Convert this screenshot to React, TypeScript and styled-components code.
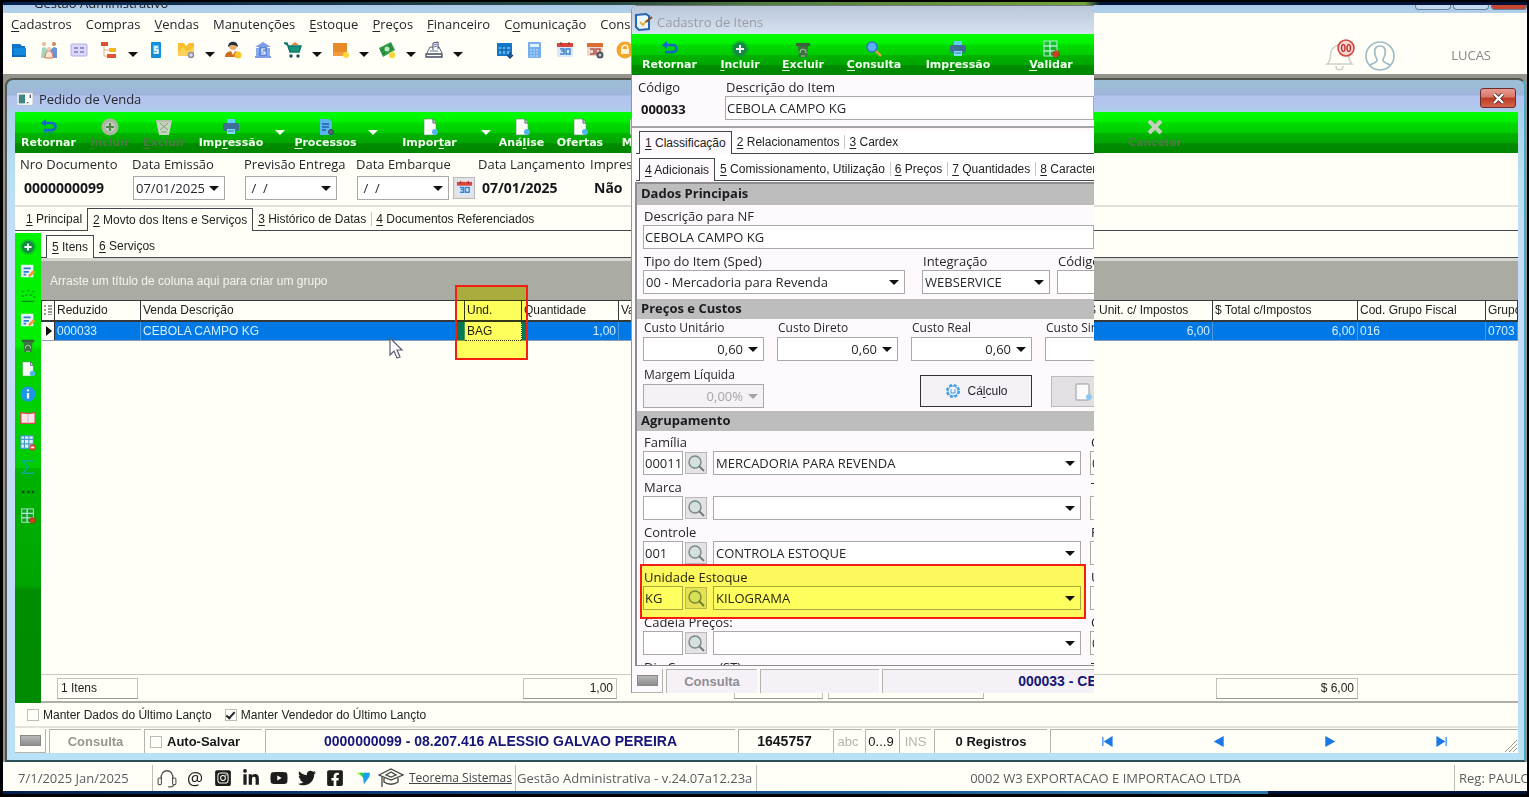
import React, { useId } from "react";
import styled, { createGlobalStyle, css } from "styled-components";
import { FaFacebookSquare, FaInstagramSquare, FaLinkedinIn, FaTwitter, FaYoutube } from "react-icons/fa";

const ui = `"Open Sans", "Noto Sans", sans-serif`;
const sys = `"Liberation Sans", Arial, sans-serif`;
const wide = `"DejaVu Sans", Verdana, sans-serif`;
const paper = "#fffff8";
const rose = "#fdf9fd";

const Global = createGlobalStyle`
  * { box-sizing: border-box; }
  body { margin: 0; background: #000; overflow: hidden; font: 13px/18px ${ui}; color: #26262c; }
  button, input, select { font: inherit; color: inherit; margin: 0; border-radius: 0; }
  button { padding: 0; background: none; border: 0; }
  svg { display: block; flex: none; }
  u { text-underline-offset: 2px; }
`;

/* Text with "&" before the shortcut letter */
const mn = (s: string) => {
  const i = s.indexOf("&");
  return i < 0 ? <span>{s}</span> : <span>{s.slice(0, i)}<u>{s[i + 1]}</u>{s.slice(i + 2)}</span>;
};

/* ---------- icons ---------- */
const Svg = ({ size = 18, children }: { size?: number; children: React.ReactNode }) => (
  <svg width={size} height={size} viewBox="0 0 18 18" fill="none" aria-hidden="true">{children}</svg>
);

const icons: Record<string, React.ReactNode> = {
  folder: <><path d="M2 3h8l2 2h3v11H2z" fill="#0f74c9" /><path d="M4 7h12v9H4z" fill="#1089e0" /><path d="M2 15h14" stroke="#0a5296" /></>,
  people: <><circle cx="4" cy="3" r="2" fill="#e9b68d" /><circle cx="14" cy="3" r="2" fill="#c48a5b" /><path d="M1 17l1-10 3-1 3 3-1 3-1 5z" fill="#a6d3b9" /><path d="M17 17V7l-3-1-4 3 2 3 1 5z" fill="#6b93d6" /><path d="M5 17c0-5 2-7 4-7s4 2 4 7z" fill="#f7e4d7" stroke="#e2714e" /><circle cx="9" cy="8" r="2" fill="#f0c7a5" /></>,
  card: <><rect x="1" y="3" width="16" height="12" rx="1" fill="#dcd9f7" stroke="#b2aee4" /><path d="M4 7h4M4 11h4M10 7h4M10 11h4" stroke="#7a78d0" strokeWidth="1.5" /></>,
  tree: <><path d="M4 4v11h6M4 9h6" stroke="#d9b390" /><rect x="1" y="1" width="7" height="4" fill="#d2542f" /><rect x="9" y="7" width="7" height="4" fill="#f3b81f" /><rect x="7" y="13" width="9" height="4" fill="#e0552e" /></>,
  phone: <><rect x="4" y="1" width="10" height="16" rx="1" fill="#128edb" /><rect x="6" y="4" width="6" height="9" fill="#59b8f2" /><path d="M11 6H8v3h3v3H7" stroke="#fff" strokeWidth="1.4" /></>,
  yellow: <><path d="M1 2h6l2 3 3-3h5v13H1z" fill="#f8c02f" /><path d="M1 12l5-6 4 5 7-5v9H1z" fill="#fbd25c" /><circle cx="14" cy="14" r="2.5" fill="#d9dce2" stroke="#8a919c" strokeWidth="1.5" /></>,
  user: <><circle cx="9" cy="5" r="4" fill="#e7ae72" /><path d="M4 6c0-7 10-7 10 0-2-2-6-2-7-2z" fill="#27313a" /><path d="M1 16c0-4 3-6 8-6s6 2 7 6z" fill="#cf6d1c" /><path d="M7 10l2 4 2-4z" fill="#fff" /><circle cx="14" cy="14" r="3.5" fill="#fbc62c" /></>,
  bank: <><path d="M1 6l8-5 8 5z" fill="#7d9de6" /><path d="M2 7h14v8H2z" fill="#8ba9ec" /><path d="M1 16h16" stroke="#7d9de6" strokeWidth="2" /><rect x="5" y="6" width="8" height="9" fill="#5f86dd" /><path d="M11 8H8v3h3v2H7" stroke="#fff" strokeWidth="1.2" /></>,
  cart: <><path d="M0 2h3l3 9h9l2-6H5z" fill="#16967f" stroke="#0d7a6a" strokeWidth="1.5" /><path d="M7 4l4-3 4 3z" fill="#e9823b" /><circle cx="7" cy="15" r="1.7" fill="#1d4e57" /><circle cx="14" cy="15" r="1.7" fill="#1d4e57" /></>,
  box: <><rect x="2" y="2" width="14" height="13" fill="#e88a2a" /><path d="M2 11h14v4H2z" fill="#f39c3b" /><circle cx="15" cy="14" r="3" fill="#ffd83b" /></>,
  money: <><path d="M1 7l12-6 4 8-12 7z" fill="#2f9b45" /><path d="M2 10l12-6M4 13l11-6" stroke="#1d7a35" /><circle cx="9" cy="8" r="2.5" fill="#bfe9bf" /><circle cx="14" cy="14" r="3.2" fill="#f9d83a" /></>,
  register: <><path d="M2 12l3-6h9l3 6" stroke="#555b6e" /><path d="M1 13h16v3H1z" fill="#fff" stroke="#444a5c" strokeWidth="1.3" /><path d="M8 9V2l5-1v7" fill="#fff" stroke="#444b66" /><path d="M9 4l3-1M9 6l3-1M5 10h8" stroke="#6471a5" /></>,
  calBlue: <><path d="M1 2h15v13H1z" fill="#1377c8" /><path d="M3 6h11v7H3z" fill="#59b2ee" /><path d="M3 9h11M6 6v7M10 6v7" stroke="#0f66ae" strokeWidth="1.4" /><path d="M14 11v6M11 14l3 3 3-3" stroke="#18417f" strokeWidth="1.3" /></>,
  calc: <><rect x="2" y="1" width="13" height="16" rx="1" fill="#76aeea" /><rect x="4" y="3" width="9" height="3" fill="#dff0ff" /><path d="M4 9h9M4 12h9M4 15h9" stroke="#a8cff6" strokeWidth="1.5" strokeDasharray="2 1" /></>,
  cal: <><rect x="1" y="2" width="16" height="14" rx="1" fill="#d9ebfa" /><path d="M1 2h16v4H1z" fill="#d8463b" /><path d="M5 1v3M13 1v3" stroke="#8b2c2c" /><path d="M4 8h4v5H4M5 10h3M10 8h4v5h-4z" stroke="#3f84cf" strokeWidth="1.5" /></>,
  calGear: <><rect x="1" y="2" width="16" height="13" rx="1" fill="#ecd9ce" /><path d="M1 2h16v4H1z" fill="#dc6c35" /><path d="M4 8h4v5H4M10 8h4v5h-4z" stroke="#b5524a" strokeWidth="1.5" /><circle cx="14" cy="14" r="2.5" fill="#ccc" stroke="#4c5560" strokeWidth="2" /></>,
  lock: <><circle cx="9" cy="9" r="8.5" fill="#f1a62a" /><rect x="5" y="8" width="8" height="5" fill="#fff3d6" /><path d="M6 8c0-5 6-5 6 0" stroke="#fff3d6" strokeWidth="1.5" /></>,
  back: <><path d="M3 5h8c6 0 6 7 0 7H4" stroke="#1467c9" strokeWidth="2.5" /><path d="M1 5l5-4v8z" fill="#1467c9" /><path d="M4 14h9" stroke="#0f5eb8" strokeDasharray="1 1" /></>,
  plus: <><circle cx="9" cy="9" r="7" fill="#128b45" /><circle cx="9" cy="9" r="8" stroke="#128b45" strokeDasharray="2 1" /><path d="M9 5v8M5 9h8" stroke="#fff" strokeWidth="2" /></>,
  plusOff: <><circle cx="9" cy="9" r="8.5" fill="#aab8a2" /><circle cx="9" cy="9" r="5" fill="#c3cdbb" /><path d="M9 5v8M5 9h8" stroke="#50864a" strokeWidth="2" /></>,
  trash: <><path d="M2 3h14v3H2z" fill="#37633a" /><path d="M4 6h10l-1 11H5z" fill="#3e7040" /><path d="M6 13c0-5 6-5 6 0M7 16h4" stroke="#9ac79a" strokeWidth="1.2" /></>,
  trashOff: <><path d="M1 2h16l-3 15H4z" fill="#c6d3be" /><path d="M5 5l8 7M13 5l-8 7M6 14h6" stroke="#7ea479" /><path d="M1 3h16" stroke="#b4c2ac" strokeWidth="2" /></>,
  printer: <><path d="M5 1h8v5H5z" fill="#5fd0f2" /><rect x="1" y="5" width="16" height="8" rx="2" fill="#3d6f96" /><path d="M5 11h8v5H5z" fill="#7fdcf5" /><path d="M6 13h6" stroke="#2e7ba5" /></>,
  docGear: <><path d="M3 1h9l3 3v13H3z" fill="#5cb4ee" /><path d="M5 6h7M5 9h7M5 12h4" stroke="#1e62a8" strokeWidth="1.3" /><circle cx="14" cy="14" r="2.5" fill="#567" stroke="#2f4a66" /></>,
  doc: <><path d="M3 1h9l3 4v12H3z" fill="#fafcf7" stroke="#5d8f62" strokeWidth=".6" /><path d="M12 1v4h3" stroke="#557" /><circle cx="14" cy="14" r="3" fill="#54b5ea" /></>,
  cross: <path d="M3 3l12 12M15 3L3 15" stroke="#c9cfbe" strokeWidth="4" />,
  lens: <><circle cx="7" cy="7" r="5" fill="#5bb0f4" stroke="#2d71d0" strokeWidth="1.5" /><path d="M11 11l5 5" stroke="#d8a04a" strokeWidth="2.5" /></>,
  search: <><circle cx="8" cy="8" r="6" fill="#cfe0e0" fillOpacity=".7" stroke="#798888" strokeWidth="1.4" /><path d="M12 12l5 5" stroke="#6e7b7b" strokeWidth="1.8" /></>,
  grid: <><rect x="2" y="1" width="13" height="15" fill="#2f8a5e" fillOpacity=".35" stroke="#b3ecd4" /><path d="M2 6h13M2 11h13M8 1v15" stroke="#b3ecd4" strokeWidth="1.4" /><circle cx="14" cy="14" r="3" fill="#d23b1d" /><circle cx="14" cy="14" r="3.5" stroke="#8d3318" strokeDasharray="2 1" /></>,
  edit: <><rect x="1" y="2" width="14" height="14" fill="#e7f4fc" /><path d="M4 6h8M4 10h6M4 13h3" stroke="#2e7ad4" strokeWidth="2" /><path d="M10 15l6-6" stroke="#f09a2c" strokeWidth="3" /></>,
  dots: <path d="M2 4h2M8 3h2M14 4h2M2 9h2M6 8h2M11 8h2M15 10h2M2 15h14" stroke="#0a8a1d" strokeWidth="1.5" />,
  info: <><circle cx="9" cy="9" r="8.5" fill="#1b95e8" /><path d="M9 8v6M9 4v2" stroke="#fff" strokeWidth="2.5" /></>,
  book: <><path d="M1 3l8 1 8-1v12H1z" fill="#f7e6ec" stroke="#df4350" strokeWidth="1.4" /><path d="M9 4v11" stroke="#d9aebb" /></>,
  table: <><rect x="1" y="1" width="14" height="14" fill="#dff2fc" /><path d="M1 5h14M1 10h14M5 1v14M10 1v14M1 1h14v14H1z" stroke="#4798c6" strokeWidth="1.3" /><circle cx="14" cy="14" r="3.5" fill="#d7402a" /><path d="M12 14h4" stroke="#fff" strokeWidth="2" /></>,
  sigma: <path d="M15 4V2H3l6 7-6 7h12v-2" stroke="#12a893" strokeWidth="1.6" />,
  more: <path d="M2 9h3M8 9h3M13 9h3" stroke="#12521b" strokeWidth="3" />,
  gear: <><circle cx="9" cy="9" r="6" stroke="#3c9fe3" strokeWidth="2" strokeDasharray="3 1.7" /><circle cx="9" cy="9" r="5" stroke="#3c9fe3" /><path d="M7 7v4h4V7" stroke="#3c9fe3" /></>,
  note: <><rect x="2" y="1" width="13" height="16" rx="1" fill="#fafafa" stroke="#9a9a9f" /><circle cx="15" cy="14" r="3" fill="#8bcaf3" /></>,
  form: <><path d="M1 2l10-1 3 2v13l-10 1-3-3z" fill="#eef6ff" stroke="#2767b4" strokeWidth="2" /><path d="M5 9l3 3 4-5" stroke="#e2b43d" strokeWidth="2" /><path d="M11 9l6-5" stroke="#844d33" strokeWidth="2" /></>,
  win: <><rect x="0" y="2" width="18" height="14" fill="#fff" stroke="#b7b7c4" /><path d="M2 4h7v10H2z" fill="#3f8680" /><path d="M11 13h2M15 4v4" stroke="#557" strokeWidth="1.5" /></>,
  headset: <><path d="M4 10C2 0 16 0 14 10" stroke="#555" strokeWidth="1.2" /><rect x="1" y="9" width="3" height="6" rx="1" stroke="#555" /><rect x="14" y="9" width="3" height="6" rx="1" stroke="#555" /><path d="M15 15c0 2-2 2-5 2" stroke="#555" /></>,
  brand: <><path d="M1 3h8v5z" fill="#b8e62c" /><path d="M5 3h7v5H8z" fill="#1ed36a" /><path d="M10 3h7l-1 5-6 8-1-8z" fill="#1b9df0" /></>,
};
const Icon = ({ name, size }: { name: string; size?: number }) => <Svg size={size}>{icons[name]}</Svg>;

const Caret = styled.i<{ $c?: string; $low?: boolean }>`
  display: block; flex: none; border: 5px solid transparent; border-bottom: 0; border-top-color: ${p => p.$c || "#111"};
  ${p => p.$low && "margin-top: 8px;"}
`;

/* ---------- application frame ---------- */
const Page = styled.div`
  position: relative; display: flex; flex-direction: column; min-height: 100vh; padding: 2px 2px 3px 3px; overflow: hidden;
`;
const Wallpaper = styled.div<{ $bottom?: boolean }>`
  height: 3px; flex: none;
  background: ${p => p.$bottom
    ? "linear-gradient(90deg, #04204d, #0d3f7c 30%, #2b76ab 83%, #001236 83%)"
    : "linear-gradient(90deg, #04204d, #2a4f45 41%, #4f7f3c 50%, #72a63c 71%, #001236 72%)"};
`;
const AppTitle = styled.div`
  display: flex; align-items: flex-end; height: 8px; flex: none; padding-left: 31px; overflow: hidden;
  background: linear-gradient(#adc8ea, #b0d2ea); color: #222; line-height: 20px;
  justify-content: space-between;
`;
const WinTabs = styled.div`
  display: flex; gap: 2px; align-self: flex-start;
`;
const WinTab = styled.span<{ $red?: boolean }>`
  width: 36px; height: 5px; border: 1px solid #66809c; border-top: 0; border-radius: 0 0 4px 4px;
  background: ${p => p.$red ? "#c8452f" : "#c4d9ee"};
`;
const Menu = styled.nav`
  display: flex; gap: 14px; height: 23px; flex: none; padding-left: 8px; background: ${paper}; white-space: nowrap; line-height: 23px;
`;
const MenuItem = styled.button``;
const Tools = styled.div`
  display: flex; align-items: flex-start; height: 38px; flex: none; padding-left: 1px; background: ${paper};
`;
const Tool = styled.button<{ $w?: number; $gap?: number }>`
  display: grid; place-items: center; width: ${p => p.$w || 30}px; height: 28px; margin-left: ${p => p.$gap || 0}px; flex: none;
`;
const Account = styled.div`
  display: flex; align-items: center; gap: 10px; margin-left: auto; padding-right: 36px; height: 38px; color: #85858c;
`;
const UserName = styled.span`margin-left: 46px;`;
const Mdi = styled.main`
  display: flex; flex: 1; min-height: 0; padding: 4px 1px 0 2px; background: #94948c;
`;
const Window = styled.section`
  display: flex; flex-direction: column; flex: 1; min-width: 0; padding: 0 6px 7px 8px;
  border: 2px solid #50564e; border-right-color: #4aaac4; border-bottom-color: #2c5058; border-radius: 8px 8px 0 0;
  background: linear-gradient(#9dbcd6 0 6px, #a0b4de 15px, #b3c5ee 16px 24px, #a9d1e8 32px, #b9e0f4 100px, #c8dcf8 180px, #bfdcf8 90%, #b8e2f6);
`;
const Caption = styled.header`
  display: flex; align-items: center; gap: 6px; height: 32px; flex: none; padding: 6px 2px 0; line-height: 26px;
`;
const Close = styled.button`
  display: grid; place-items: center; width: 36px; height: 20px; margin: 0 0 2px auto; border: 1px solid #6d2c2c; border-radius: 3px;
  background: linear-gradient(#e89a90, #d9786a 45%, #bb3a22 50%, #d6654e);
`;
const GreenBar = styled.div`
  display: flex; height: 41px; flex: none; overflow: hidden;
  background: linear-gradient(#00ff00, #00f000 25%, #00dc00 26%, #00cc00 50%, #00b400 51%, #00a400 76%, #008c00 77%, #008600);
`;
const Act = styled.button<{ $w: number; $off?: boolean; $gap?: number }>`
  display: flex; flex-direction: column; align-items: center; flex: none; width: ${p => p.$w}px; margin-left: ${p => p.$gap || 0}px; padding-top: 6px;
  font: bold 11px/14px ${wide}; color: #f3fff0; white-space: nowrap;
  ${p => p.$off && css`color: #4b7a43;`}
`;
const Drop = styled.button<{ $w: number }>`
  display: grid; place-items: center; width: ${p => p.$w}px; height: 41px; flex: none;
`;
const Client = styled.div`
  display: flex; flex-direction: column; flex: 1; min-height: 0; background: ${paper};
`;
const Head = styled.div`
  display: flex; height: 54px; flex: none; padding: 2px 0 0 5px; border-bottom: 2px solid #e0e0da; white-space: nowrap;
`;
const HeadCell = styled.div<{ $w: number }>`width: ${p => p.$w}px; flex: none;`;
const HeadRow = styled.div`display: flex; align-items: center; gap: 4px; height: 24px; margin: 3px 0 0 1px;`;
const Strong = styled.output`display: block; padding-left: 3px; font-weight: bold; font-size: 14px; color: #15151a;`;

/* ---------- controls ---------- */
const Combo = styled.div<{ $w?: number; $off?: boolean }>`
  position: relative; display: flex; align-items: center; width: ${p => p.$w ? `${p.$w}px` : "auto"}; height: 24px; flex: none;
  border: 1px solid #a9a9ac; background: ${p => p.$off ? "#f5f1f5" : "#fff"};
  & > i { position: absolute; right: 5px; pointer-events: none; }
`;
const ComboSelect = styled.select<{ $right?: boolean }>`
  appearance: none; width: 100%; height: 100%; border: 0; padding: 0 20px 0 2px; background: none; outline: 0; opacity: 1;
  text-align-last: ${p => p.$right ? "right" : "left"};
  &:disabled { color: #a5a5a8; }
`;
const Box = styled.input<{ $w?: number }>`
  width: ${p => p.$w ? `${p.$w}px` : "100%"}; height: 24px; flex: none; padding: 0 0 0 1px; border: 1px solid #a9a9ac; background: #fff; outline: 0;
`;
const Choice = ({ id, label, value, w, right, off }: { id?: string; label?: string; value: string; w?: number; right?: boolean; off?: boolean }) => (
  <Combo $w={w} $off={off}>
    <ComboSelect id={id} aria-label={label} $right={right} disabled={off}><option>{value}</option></ComboSelect>
    <Caret $c={off ? "#a5a5a8" : undefined} />
  </Combo>
);
const SmallBtn = styled.button`
  display: grid; place-items: center; width: 22px; height: 22px; flex: none; border: 1px solid #b9b9bb; background: #e4e2e4;
`;

/* ---------- tabs ---------- */
const TabRow = styled.div<{ $pad?: number; $mt?: number }>`
  display: flex; height: 23px; flex: none; margin-top: ${p => p.$mt || 0}px; padding-left: ${p => p.$pad || 0}px;
  border-bottom: 1px solid #44484c; font: 12px/22px ${sys}; white-space: nowrap; color: #222;
`;
const Tab = styled.button<{ $on?: boolean; $bg?: string; $sep?: boolean }>`
  position: relative; padding: 0 5px; flex: none; height: 22px;
  ${p => p.$sep && css`&::before { content: ""; position: absolute; left: 0; top: 4px; height: 14px; border-left: 1px solid #c8c8c4; }`}
  ${p => p.$on && css`height: 23px; border: 1px solid #44484c; border-bottom: 0; background: ${p.$bg || paper};`}
`;

/* ---------- order grid ---------- */
const Work = styled.div`display: flex; flex: 1; min-height: 0; margin-top: 2px;`;
const Side = styled.aside`
  display: flex; flex-direction: column; align-items: center; width: 26px; flex: none; padding-top: 1px;
  background: linear-gradient(#00f400, #00ee00 24%, #00d400 25%, #00cc00 50%, #00b400 50%, #00a400 75%, #008e00 76%, #008a00);
`;
const SideBtn = styled.button<{ $tall?: boolean }>`display: grid; place-items: center; width: 26px; height: ${p => p.$tall ? 25 : 24}px;`;
const Sheet = styled.div`position: relative; display: flex; flex-direction: column; flex: 1; min-width: 0;`;
const GroupHint = styled.div`
  height: 42px; flex: none; padding: 0 0 0 9px; border-top: 3px solid #d8d8d2; background: #aaaca4; color: #f4f4ee; font: 12px/40px ${sys};
`;
const GridArea = styled.div`flex: 1; min-height: 0; border-bottom: 1px solid #c8c8c0;`;
const Table = styled.table`
  width: 100%; table-layout: fixed; border-collapse: collapse; font: 12px/18px ${sys}; white-space: nowrap; color: #222;
  th, td { height: 20px; padding: 0 2px; overflow: hidden; text-align: left; font-weight: normal; }
  th { border: 1px solid #33383a; border-width: 1px 1px 2px; }
  td { background: #0079e6; color: #d4efff; border-right: 1px solid #4f9ae0; border-bottom: 1px solid #88a0b8; }
`;
const Num = styled.td`&&& { text-align: right; }`;
const Edit = styled.td`&&& { background: #fff; color: #222; border: 1px dotted #333; }`;
const Mark = styled.td`&&& { background: ${paper}; color: #111; border-right: 1px solid #333; padding: 0; }`;
const Totals = styled.div`
  display: flex; align-items: center; height: 28px; flex: none; padding-left: 16px;
  background: ${paper}; border-bottom: 2px solid #aeb0a8; font: 12px/19px ${sys}; color: #222;
`;
const Total = styled.output<{ $w: number; $gap?: number; $right?: boolean }>`
  width: ${p => p.$w}px; height: 21px; margin-left: ${p => p.$gap || 0}px; flex: none; padding: 0 3px; border: 1px solid #c0c2b8; border-bottom-color: #999;
  text-align: ${p => p.$right ? "right" : "left"};
`;
const Highlight = styled.div<{ $x: number; $y: number; $w: number; $h: number }>`
  position: absolute; left: ${p => p.$x}px; top: ${p => p.$y}px; width: ${p => p.$w}px; height: ${p => p.$h}px;
  border: 2px solid #f41f12; pointer-events: none;
  &::before { content: ""; position: absolute; inset: 0; background: #ffff5e; mix-blend-mode: multiply; }
`;
const Pointer = styled.div`position: absolute; left: 347px; top: 103px;`;
const Checks = styled.div`
  display: flex; align-items: center; gap: 13px; height: 25px; flex: none; padding-left: 12px; border-bottom: 2px solid #e4e4de; font: 12px/20px ${sys}; color: #222;
`;
const CheckLabel = styled.label`display: flex; align-items: center; gap: 4px;`;
const Check = styled.input`
  appearance: none; width: 12px; height: 12px; margin: 0; border: 1px solid #bdbdb6; background: #fffffb; display: grid; place-items: center;
  &:checked::before { content: ""; width: 7px; height: 3px; border: 2px solid #222; border-top: 0; border-right: 0; transform: rotate(-48deg); }
`;
const Status = styled.footer`
  display: flex; gap: 3px; height: 25px; flex: none; padding-top: 1px; font: bold 13px/23px ${sys}; color: #15151a; white-space: nowrap;
`;
const Panel = styled.div<{ $w?: number; $c?: string; $thin?: boolean; $big?: boolean; $start?: boolean; $bg?: string }>`
  display: flex; align-items: center; justify-content: ${p => p.$start ? "flex-start" : "center"}; gap: 5px; ${p => p.$w ? `width: ${p.$w}px; flex: none;` : "flex: 1;"}
  border: 1px solid #b4b4ae; border-right: 0; border-bottom: 0; color: ${p => p.$c || "inherit"}; background: ${p => p.$bg || "none"};
  ${p => p.$thin && css`font-weight: normal;`}
  ${p => p.$big && css`font-size: 14px;`}
  ${p => p.$start && css`padding-left: 5px;`}
`;
const Led = styled.div`
  display: grid; place-items: center; width: 31px; flex: none; border: 1px solid #b4b4ae; border-top: 0; border-left: 0;
  &::before { content: ""; width: 19px; height: 9px; border: 1px solid #888; background: linear-gradient(#b8b8b8, #8d8d8d); }
`;
const Nav = styled.div`
  position: relative; display: flex; justify-content: space-around; flex: 1; padding-right: 20px; border: 1px solid #b4b4ae; border-right: 0; border-bottom: 0;
`;
const NavBtn = styled.button`display: grid; place-items: center; width: 16px;`;
const Grip = styled.svg`position: absolute; right: 1px; bottom: 1px;`;

/* ---------- bottom bar ---------- */
const Bottom = styled.footer`
  display: flex; height: 29px; flex: none; padding-top: 3px; background: ${paper}; color: #5c5c62; line-height: 26px; white-space: nowrap; overflow: hidden;
`;
const Slot = styled.div<{ $w?: number; $pad?: number; $sep?: boolean }>`
  display: flex; align-items: center; ${p => p.$w ? `width: ${p.$w}px; flex: none;` : "flex: 1; justify-content: center;"}
  padding-left: ${p => p.$pad || 0}px; ${p => p.$sep && "border-right: 1px solid #bdbdb8;"}
`;
const Social = styled.a`display: grid; place-items: center; width: 28px; flex: none; color: #1d1d1d; font-size: 18px; text-decoration: none;`;
const Site = styled.a`color: #44444a; text-decoration: underline; font-size: 12px; padding-left: 4px;`;

/* ---------- item window ---------- */
const ItemWindow = styled.section`
  position: absolute; left: 631px; top: 5px; width: 463px; overflow: hidden; white-space: nowrap;
  border-left: 1px solid #8f97a5; border-radius: 6px 0 0 0; background: ${rose};
`;
const ItemCaption = styled.header`
  display: flex; align-items: center; gap: 4px; height: 29px; padding: 3px 0 0 3px; color: #9b9ba2; border-top: 1px solid #777;
  background: linear-gradient(#b9c7da, #d7e2f0);
`;
const ItemHead = styled.div`display: flex; height: 53px; padding: 3px 0 0 6px; border-bottom: 2px solid #a5a5a8;`;
const ItemHeadCell = styled.div<{ $w?: number }>`${p => p.$w ? `width: ${p.$w}px;` : "flex: 1;"} flex-shrink: 0;`;
const ItemCode = styled.output`display: block; padding: 4px 0 0 3px; font-weight: bold; color: #15151a;`;
const TabStrip = styled.div`padding-left: 4px; background: #fff;`;
const Scroll = styled.div`
  height: 484px; margin: 1px 0 2px 3px; overflow: hidden; border: 2px solid #8d8d90; border-width: 2px 0 1px 2px;
`;
const Section = styled.h3<{ $mt?: number; $tall?: boolean }>`
  height: ${p => p.$tall ? 21 : 20}px; margin: ${p => p.$mt || 0}px 0 0; padding-left: 4px; background: #bdbdbd;
  font-size: 13px; line-height: 19px; color: #1b1b20;
`;
const Line = styled.div<{ $mt?: number; $gap?: number }>`
  display: flex; gap: ${p => p.$gap || 0}px; margin-top: ${p => p.$mt || 0}px; padding-left: 6px;
`;
const FieldBox = styled.div<{ $w?: number; $mt?: number }>`
  display: flex; flex-direction: column; flex: none; width: ${p => p.$w ? `${p.$w}px` : "100%"}; margin-top: ${p => p.$mt || 0}px;
  label { height: 18px; padding-left: 1px; }
`;
const Small = styled.label`font-size: 12px;`;
const Lookup = styled.div`display: flex; align-items: center;`;
const LookupBtn = styled(SmallBtn)`margin: 0 6px 0 2px;`;
const CalcBtn = styled.button`
  display: flex; align-items: center; justify-content: center; gap: 5px; width: 112px; height: 32px; margin: 14px 0 0 156px; flex: none;
  border: 1px solid #333; background: #f5f1f6; font: 12px/18px ${sys};
`;
const GhostBtn = styled.button`
  width: 80px; height: 31px; margin: 15px 0 0 19px; padding-left: 22px; flex: none; border: 1px solid #bcbcbe; background: #e2e0e2;
`;

const Field = ({ label, w, small, children }: { label: string; w?: number; small?: boolean; children: (id: string) => React.ReactNode }) => {
  const id = useId();
  return <FieldBox $w={w}>{small ? <Small htmlFor={id}>{label}</Small> : <label htmlFor={id}>{label}</label>}{children(id)}</FieldBox>;
};

const Group = ({ label, code, value, next, nextCode = "", mt = 3 }: { label: string; code: string; value: string; next: string; nextCode?: string; mt?: number }) => (
  <Line $mt={mt} $gap={9}>
    <Field label={label} w={438}>{id => (
      <Lookup>
        <Box id={id} $w={40} defaultValue={code} />
        <LookupBtn aria-label={`Pesquisar ${label}`}><Icon name="search" /></LookupBtn>
        <Choice label={`Descrição ${label}`} value={value} w={368} />
      </Lookup>
    )}</Field>
    <Field label={next} w={60}>{id => <Box id={id} defaultValue={nextCode} />}</Field>
  </Line>
);

const menus = ["&Cadastros", "Co&mpras", "&Vendas", "Ma&nutenções", "&Estoque", "&Preços", "&Financeiro", "C&omunicação", "Consultas"];
const tools = ["folder", "people", "card", "tree", ">", "phone", "yellow", ">", "user", "bank", "cart", ">", "box", ">", "money", ">", "register", ">"];
const tools2 = ["calBlue", "calc", "cal", "calGear", "lock"];
const side = ["plus", "edit", "dots", "edit", "trash", "doc", "info", "book", "table", "sigma", "more", "grid"];
const emptyDate = "\u00a0/\u00a0\u00a0/";

const DateField = ({ label, value, w, extra }: { label: string; value: string; w: number; extra?: boolean }) => {
  const id = useId();
  return (
    <HeadCell $w={w}>
      <label htmlFor={id}>{label}</label>
      <HeadRow>
        <Choice id={id} value={value} w={92} />
        {extra && <SmallBtn aria-label="Calendário"><Icon name="cal" size={17} /></SmallBtn>}
      </HeadRow>
    </HeadCell>
  );
};

export default function App() {
  return (
    <Page>
      <Global />
      <Wallpaper />
      <AppTitle>
        <span>Gestão Administrativo</span>
        <WinTabs><WinTab /><WinTab /><WinTab $red /></WinTabs>
      </AppTitle>
      <Menu>{menus.map(m => <MenuItem key={m}>{mn(m)}</MenuItem>)}</Menu>
      <Tools>
        {tools.map((t, i) => t === ">"
          ? <Tool key={i} $w={17} aria-label="Mais opções"><Caret $low /></Tool>
          : <Tool key={i} aria-label={t}><Icon name={t} /></Tool>)}
        {tools2.map((t, i) => <Tool key={t} $gap={i ? 0 : 24} aria-label={t}><Icon name={t} /></Tool>)}
        <Account>
          <svg width="30" height="34" viewBox="0 0 30 34" fill="none">
            <path d="M2 26c4-3 3-7 4-12 1-4 4-6 7-7l2-2 2 2c3 1 5 4 6 7 1 5 0 8 4 12z" stroke="#cfd0ca" strokeWidth="1.5" />
            <path d="M11 28c0 5 7 5 7 0" stroke="#cfd0ca" strokeWidth="1.5" />
            <circle cx="21" cy="10" r="8" fill="#f8d7d0" stroke="#d9443c" strokeWidth="1.6" />
            <text x="21" y="14" textAnchor="middle" fontSize="10" fontWeight="bold" fontFamily="Liberation Sans" fill="#c02626">00</text>
          </svg>
          <svg width="30" height="32" viewBox="0 0 30 32" fill="none" stroke="#9fbcc6" strokeWidth="1.7">
            <circle cx="15" cy="17" r="14" />
            <path d="M15 7c-5 0-6 4-5 8 0 3 2 4 2 6 0 3-4 3-7 5M15 7c5 0 6 4 5 8 0 3-2 4-2 6 0 3 4 3 7 5" />
          </svg>
          <UserName>LUCAS</UserName>
        </Account>
      </Tools>

      <Mdi>
        <Window>
          <Caption>
            <Icon name="win" size={16} /><span>Pedido de Venda</span>
            <Close aria-label="Fechar"><svg width="13" height="11" viewBox="0 0 13 11"><path d="M2 1l9 9M11 1L2 10" stroke="#5a2a2a" strokeWidth="4" /><path d="M2 1l9 9M11 1L2 10" stroke="#fff" strokeWidth="2.4" /></svg></Close>
          </Caption>
          <Client>
            <GreenBar>
              <Act $w={67}><Icon name="back" />Retornar</Act>
              <Act $w={56} $off><Icon name="plusOff" />{mn("&Incluir")}</Act>
              <Act $w={52} $off><Icon name="trashOff" />{mn("&Excluir")}</Act>
              <Act $w={82}><Icon name="printer" />{mn("Imp&ressão")}</Act>
              <Drop $w={16} aria-label="Opções de impressão"><Caret $c="#f3fff0" /></Drop>
              <Act $w={75}><Icon name="docGear" />{mn("&Processos")}</Act>
              <Drop $w={20} aria-label="Opções de processos"><Caret $c="#f3fff0" /></Drop>
              <Act $w={93}><Icon name="doc" />{mn("Impor&tar")}</Act>
              <Drop $w={20} aria-label="Opções de importação"><Caret $c="#f3fff0" /></Drop>
              <Act $w={51}><Icon name="doc" />{mn("Aná&lise")}</Act>
              <Act $w={66}><Icon name="doc" />Ofertas</Act>
              <Act $w={46}><Icon name="doc" />Mais</Act>
              <Act $w={80} $gap={456} $off><Icon name="cross" />Cancelar</Act>
            </GreenBar>
            <Head>
              <HeadCell $w={112}>Nro Documento<HeadRow><Strong>0000000099</Strong></HeadRow></HeadCell>
              <DateField label="Data Emissão" value="07/01/2025" w={112} />
              <DateField label="Previsão Entrega" value={emptyDate} w={112} />
              <DateField label="Data Embarque" value={emptyDate} w={122} extra />
              <HeadCell $w={112}>Data Lançamento<HeadRow><Strong>07/01/2025</Strong></HeadRow></HeadCell>
              <HeadCell $w={80}>Impresso<HeadRow><Strong>Não</Strong></HeadRow></HeadCell>
            </Head>
            <TabRow $pad={6} $mt={1} role="tablist">
              <Tab role="tab">{mn("&1 Principal")}</Tab>
              <Tab role="tab" $on>{mn("&2 Movto dos Itens e Serviços")}</Tab>
              <Tab role="tab">{mn("&3 Histórico de Datas")}</Tab>
              <Tab role="tab" $sep>{mn("&4 Documentos Referenciados")}</Tab>
            </TabRow>
            <Work>
              <Side>{side.map((s, i) => <SideBtn key={i} $tall={i % 2 === 0} aria-label={s}><Icon name={s} size={16} /></SideBtn>)}</Side>
              <Sheet>
                <TabRow $pad={5} $mt={2} role="tablist">
                  <Tab role="tab" $on>{mn("&5 Itens")}</Tab>
                  <Tab role="tab">{mn("&6 Serviços")}</Tab>
                </TabRow>
                <GroupHint>Arraste um título de coluna aqui para criar um grupo</GroupHint>
                <GridArea>
                  <Table>
                    <colgroup>
                      {[13, 86, 324, 57, 97].map(w => <col key={w} width={w} />)}
                      <col />
                      {[126, 145, 128, 32].map(w => <col key={w} width={w} />)}
                    </colgroup>
                    <thead><tr>
                      <th><svg width="8" height="10" viewBox="0 0 8 10"><path d="M0 1h2M0 5h2M0 9h2M4 1h4M4 4h4M4 7h4M4 10h4" stroke="#333" /></svg></th>
                      <th>Reduzido</th><th>Venda Descrição</th><th>Und.</th><th>Quantidade</th><th>Valor Unitário</th>
                      <th>$ Unit. c/ Impostos</th><th>$ Total c/Impostos</th><th>Cod. Grupo Fiscal</th><th>Grupo</th>
                    </tr></thead>
                    <tbody><tr>
                      <Mark><svg width="12" height="12" viewBox="0 0 12 12"><path d="M4 1l6 5-6 5z" fill="#111" /></svg></Mark>
                      <td>000033</td><td>CEBOLA CAMPO KG</td><Edit>BAG</Edit><Num>1,00</Num><Num />
                      <Num>6,00</Num><Num>6,00</Num><td>016</td><td>0703</td>
                    </tr></tbody>
                  </Table>
                </GridArea>
                <Totals>
                  <Total $w={81}>1 Itens</Total>
                  <Total $w={94} $gap={385} $right>1,00</Total>
                  <Total $w={89} $gap={117} />
                  <Total $w={156} $gap={5} />
                  <Total $w={142} $gap={232} $right>$ 6,00</Total>
                </Totals>
                <Highlight $x={414} $y={52} $w={73} $h={75} />
                <Pointer>
                  <svg width="16" height="24" viewBox="0 0 16 24"><path d="M2 2v17l4-4 3 7 3-1-3-7h5z" fill="#fff" stroke="#5b5b74" strokeWidth="1.2" /></svg>
                </Pointer>
              </Sheet>
            </Work>
            <Checks>
              <CheckLabel><Check type="checkbox" />Manter Dados do Último Lançto</CheckLabel>
              <CheckLabel><Check type="checkbox" defaultChecked />Manter Vendedor do Último Lançto</CheckLabel>
            </Checks>
            <Status>
              <Led />
              <Panel $w={92} $c="#96968f">Consulta</Panel>
              <Panel $w={118} $start as="label"><Check type="checkbox" />Auto-Salvar</Panel>
              <Panel $w={470} $big $c="#15157a">0000000099 - 08.207.416 ALESSIO GALVAO PEREIRA</Panel>
              <Panel $w={92} $big>1645757</Panel>
              <Panel $w={29} $thin $c="#b4b4ae">abc</Panel>
              <Panel $w={31} $thin>0...9</Panel>
              <Panel $w={32} $thin $c="#b4b4ae">INS</Panel>
              <Panel $w={113}>0 Registros</Panel>
              <Nav>
                {["M3 1v10M13 1v10L5 6z", "M12 1v10L3 6z", "M3 1v10l9-5z", "M2 1v10l8-5zM12 1v10"].map((d, i) => (
                  <NavBtn key={d} aria-label={["Primeiro", "Anterior", "Próximo", "Último"][i]}>
                    <svg width="14" height="11" viewBox="0 0 15 12"><path d={d} fill="#1a78e6" stroke="#1a78e6" strokeWidth="1.2" /></svg>
                  </NavBtn>
                ))}
                <Grip width="13" height="13" viewBox="0 0 13 13"><path d="M1 13L13 1M5 13l8-8M9 13l4-4" stroke="#999" /></Grip>
              </Nav>
            </Status>
          </Client>
        </Window>
      </Mdi>

      <Bottom>
        <Slot $w={150} $pad={15} $sep>7/1/2025 Jan/2025</Slot>
        <Slot $w={363} $sep>
          <Social href="#" aria-label="Suporte"><Icon name="headset" size={20} /></Social>
          <Social href="#" aria-label="E-mail">@</Social>
          <Social href="#" aria-label="Instagram"><FaInstagramSquare /></Social>
          <Social href="#" aria-label="LinkedIn"><FaLinkedinIn /></Social>
          <Social href="#" aria-label="YouTube"><FaYoutube /></Social>
          <Social href="#" aria-label="Twitter"><FaTwitter /></Social>
          <Social href="#" aria-label="Facebook"><FaFacebookSquare /></Social>
          <Social href="#" aria-label="Teorema"><Icon name="brand" size={16} /></Social>
          <Social href="#" aria-label="Treinamento">
            <svg width="26" height="20" viewBox="0 0 26 20" fill="none" stroke="#444" strokeWidth="1.3"><path d="M1 7l12-6 12 6-12 5zM8 7l5-3 5 3-5 2zM6 10v4c4 3 10 3 14 0v-4M4 9v10" /></svg>
          </Social>
          <Site href="#">Teorema Sistemas</Site>
        </Slot>
        <Slot $w={241} $pad={1} $sep>Gestão Administrativa - v.24.07a12.23a</Slot>
        <Slot $sep>0002 W3 EXPORTACAO E IMPORTACAO LTDA</Slot>
        <Slot $w={72} $pad={4}>Reg: PAULO</Slot>
      </Bottom>
      <Wallpaper $bottom />

      <ItemWindow>
        <ItemCaption><Icon name="form" />Cadastro de Itens</ItemCaption>
        <GreenBar>
          <Act $w={75}><Icon name="back" />Retornar</Act>
          <Act $w={66}><Icon name="plus" />{mn("&Incluir")}</Act>
          <Act $w={60}><Icon name="trash" />{mn("&Excluir")}</Act>
          <Act $w={82}><Icon name="lens" />{mn("&Consulta")}</Act>
          <Act $w={86}><Icon name="printer" />{mn("Imp&ressão")}</Act>
          <Act $w={100}><Icon name="grid" />{mn("&Validar")}</Act>
        </GreenBar>
        <ItemHead>
          <ItemHeadCell $w={87}>Código<ItemCode>000033</ItemCode></ItemHeadCell>
          <ItemHeadCell><FieldBox><label htmlFor="item-desc">Descrição do Item</label><Box id="item-desc" defaultValue="CEBOLA CAMPO KG" /></FieldBox></ItemHeadCell>
        </ItemHead>
        <TabStrip>
          <TabRow $pad={3} $mt={3} role="tablist">
            <Tab role="tab" $on $bg={rose}>{mn("&1 Classificação")}</Tab>
            <Tab role="tab">{mn("&2 Relacionamentos")}</Tab>
            <Tab role="tab" $sep>{mn("&3 Cardex")}</Tab>
          </TabRow>
          <TabRow $pad={3} $mt={4} role="tablist">
            <Tab role="tab" $on $bg={rose}>{mn("&4 Adicionais")}</Tab>
            <Tab role="tab">{mn("&5 Comissionamento, Utilização")}</Tab>
            <Tab role="tab" $sep>{mn("&6 Preços")}</Tab>
            <Tab role="tab" $sep>{mn("&7 Quantidades")}</Tab>
            <Tab role="tab" $sep>{mn("&8 Características")}</Tab>
          </TabRow>
        </TabStrip>
        <Scroll>
          <Section $tall>Dados Principais</Section>
          <Line $mt={2}><Field label="Descrição para NF">{id => <Box id={id} defaultValue="CEBOLA CAMPO KG" />}</Field></Line>
          <Line $mt={3}>
            <Field label="Tipo do Item (Sped)" w={279}>{id => <Choice id={id} value="00 - Mercadoria para Revenda" w={262} />}</Field>
            <Field label="Integração" w={135}>{id => <Choice id={id} value="WEBSERVICE" w={128} />}</Field>
            <Field label="Código" w={80}>{id => <Box id={id} />}</Field>
          </Line>
          <Section $mt={5}>Preços e Custos</Section>
          <Line $gap={13}>
            {["Custo Unitário", "Custo Direto", "Custo Real"].map(l => (
              <Field key={l} small label={l} w={121}>{id => <Choice id={id} value="0,60" right />}</Field>
            ))}
            <Field small label="Custo Simulado" w={121}>{id => <Choice id={id} value="" right />}</Field>
          </Line>
          <Line>
            <FieldBox $w={121} $mt={5}>
              <Small htmlFor="margem">Margem Líquida</Small>
              <Choice id="margem" value="0,00%" right off />
            </FieldBox>
            <CalcBtn><Icon name="gear" />{mn("Cá&lculo")}</CalcBtn>
            <GhostBtn aria-label="Documento"><Icon name="note" /></GhostBtn>
          </Line>
          <Section $mt={3}>Agrupamento</Section>
          <Group mt={2} label="Família" code="00011" value="MERCADORIA PARA REVENDA" next="Coleção" nextCode="0" />
          <Group label="Marca" code="" value="" next="Tipo" />
          <Group label="Controle" code="001" value="CONTROLA ESTOQUE" next="Peso" />
          <Group label="Unidade Estoque" code="KG" value="KILOGRAMA" next="Unidade" />
          <Group label="Cadeia Preços:" code="" value="" next="Classe" nextCode="0" />
          <Group label="Dia Compra (ST):" code="" value="" next="Tipo" />
        </Scroll>
        <Status>
          <Led />
          <Panel $w={91} $c="#8e8e93" $bg="#f5f1f6">Consulta</Panel>
          <Panel $w={119} $bg="#f5f1f6" />
          <Panel $w={470} $big $c="#15157a" $bg="#f5f1f6">000033 - CEBOLA CAMPO KG</Panel>
        </Status>
        <Highlight $x={8} $y={559} $w={446} $h={55} />
      </ItemWindow>
    </Page>
  );
}
